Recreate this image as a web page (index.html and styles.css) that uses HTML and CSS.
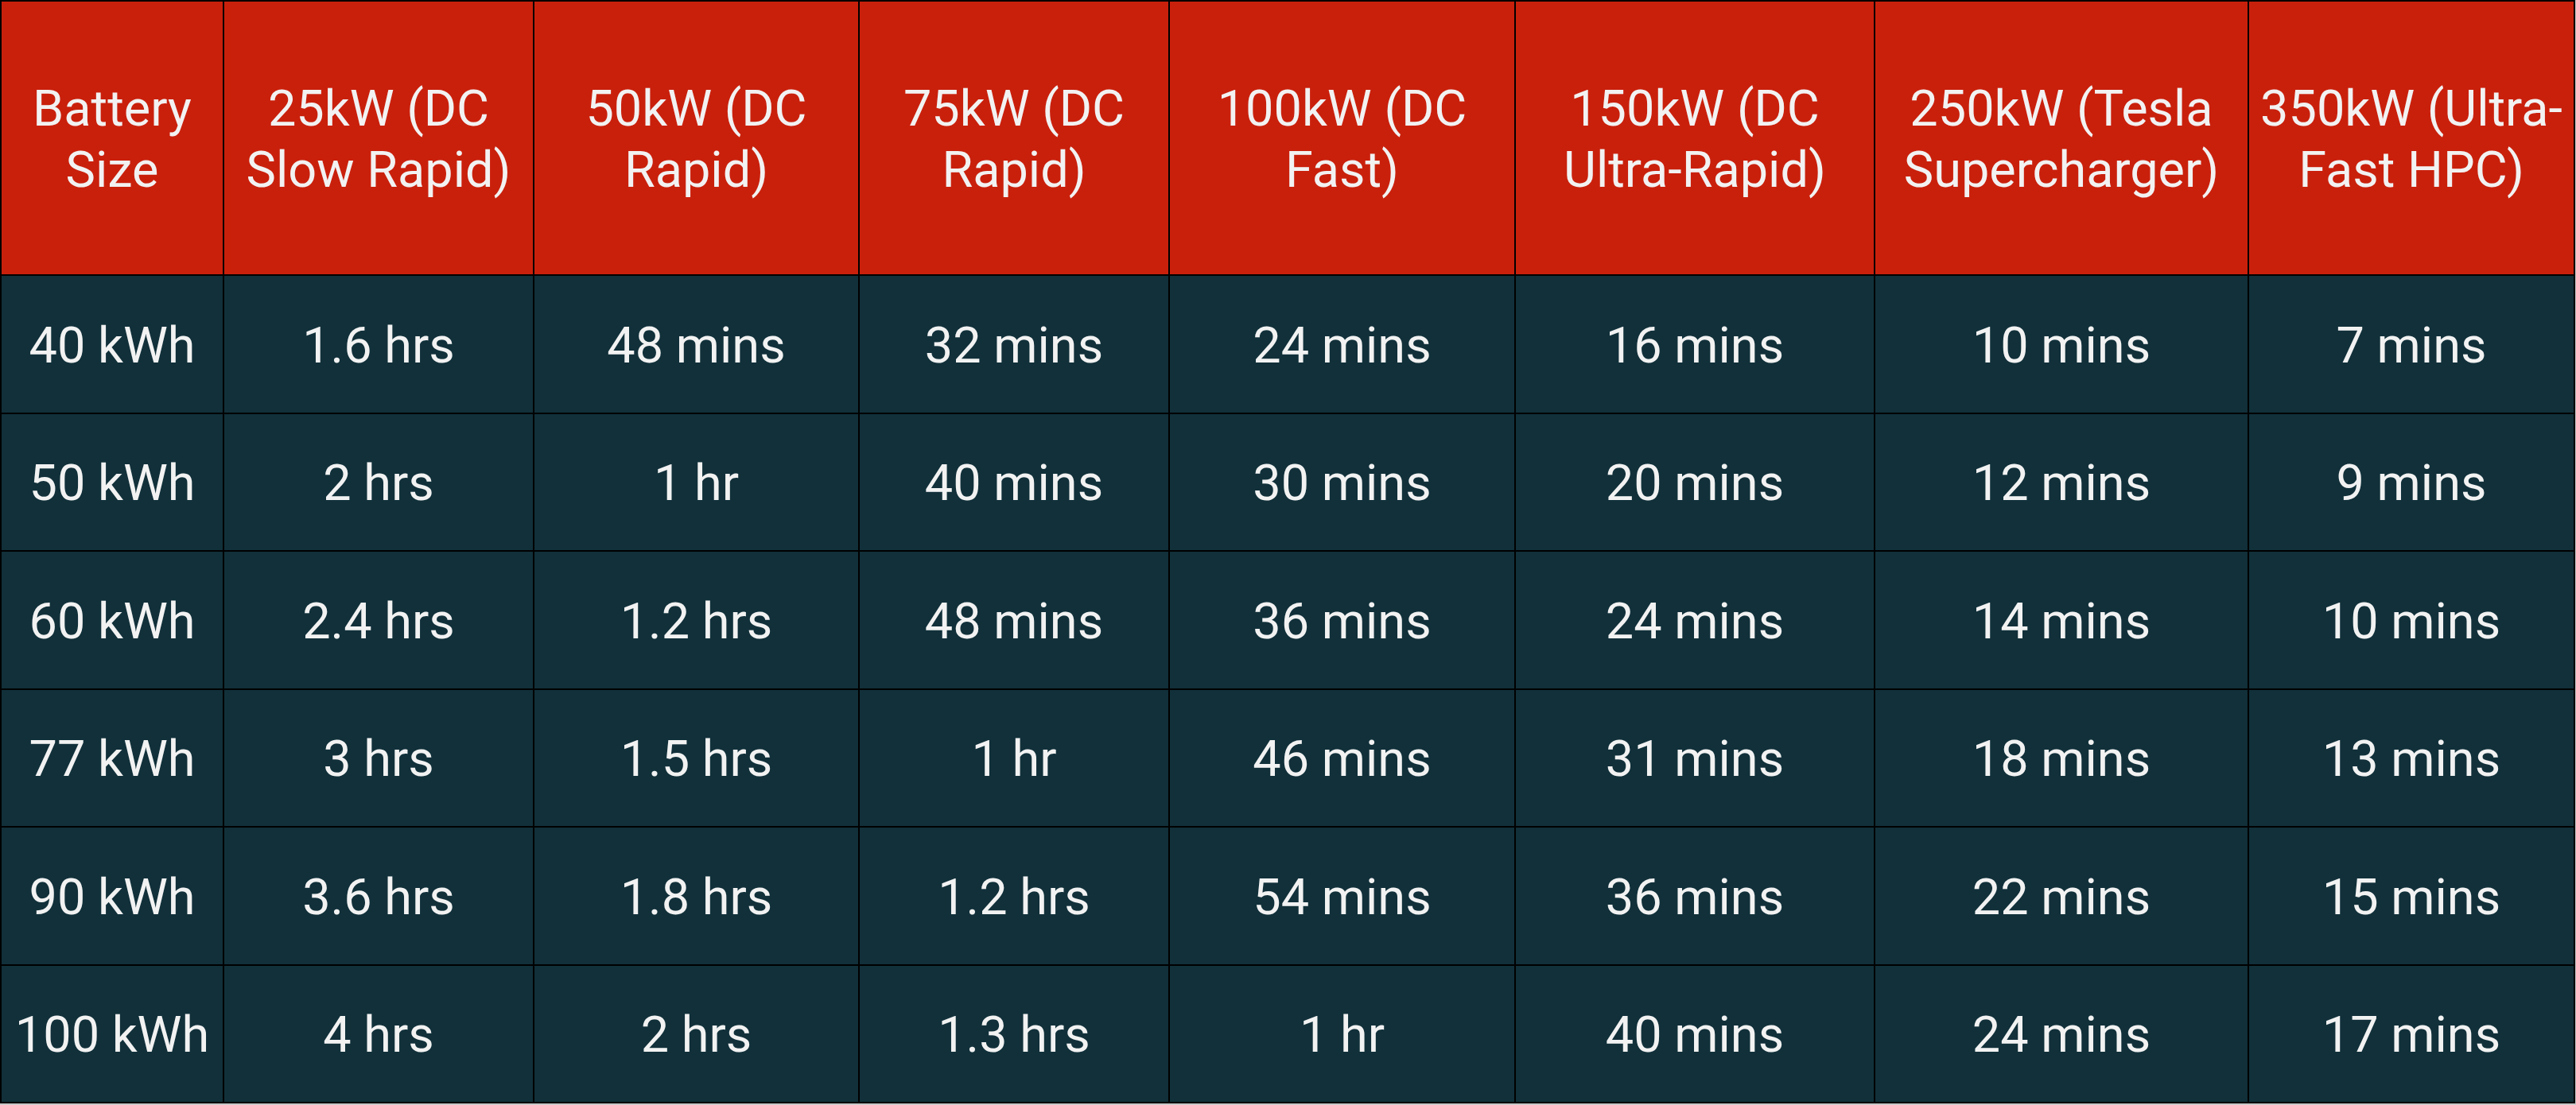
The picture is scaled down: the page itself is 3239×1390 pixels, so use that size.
FILE: index.html
```html
<!DOCTYPE html>
<html lang="en">
<head>
<meta charset="utf-8">
<title>EV Rapid Charging Times</title>
<link rel="stylesheet" href="styles.css">
</head>
<body>
<div class="table" role="table">
  <div class="cell head">Battery Size</div>
  <div class="cell head">25kW (DC Slow Rapid)</div>
  <div class="cell head">50kW (DC Rapid)</div>
  <div class="cell head">75kW (DC Rapid)</div>
  <div class="cell head">100kW (DC Fast)</div>
  <div class="cell head">150kW (DC Ultra-Rapid)</div>
  <div class="cell head">250kW (Tesla Supercharger)</div>
  <div class="cell head">350kW (Ultra-Fast HPC)</div>

  <div class="cell">40 kWh</div>
  <div class="cell">1.6 hrs</div>
  <div class="cell">48 mins</div>
  <div class="cell">32 mins</div>
  <div class="cell">24 mins</div>
  <div class="cell">16 mins</div>
  <div class="cell">10 mins</div>
  <div class="cell">7 mins</div>

  <div class="cell">50 kWh</div>
  <div class="cell">2 hrs</div>
  <div class="cell">1 hr</div>
  <div class="cell">40 mins</div>
  <div class="cell">30 mins</div>
  <div class="cell">20 mins</div>
  <div class="cell">12 mins</div>
  <div class="cell">9 mins</div>

  <div class="cell">60 kWh</div>
  <div class="cell">2.4 hrs</div>
  <div class="cell">1.2 hrs</div>
  <div class="cell">48 mins</div>
  <div class="cell">36 mins</div>
  <div class="cell">24 mins</div>
  <div class="cell">14 mins</div>
  <div class="cell">10 mins</div>

  <div class="cell">77 kWh</div>
  <div class="cell">3 hrs</div>
  <div class="cell">1.5 hrs</div>
  <div class="cell">1 hr</div>
  <div class="cell">46 mins</div>
  <div class="cell">31 mins</div>
  <div class="cell">18 mins</div>
  <div class="cell">13 mins</div>

  <div class="cell">90 kWh</div>
  <div class="cell">3.6 hrs</div>
  <div class="cell">1.8 hrs</div>
  <div class="cell">1.2 hrs</div>
  <div class="cell">54 mins</div>
  <div class="cell">36 mins</div>
  <div class="cell">22 mins</div>
  <div class="cell">15 mins</div>

  <div class="cell">100 kWh</div>
  <div class="cell">4 hrs</div>
  <div class="cell">2 hrs</div>
  <div class="cell">1.3 hrs</div>
  <div class="cell">1 hr</div>
  <div class="cell">40 mins</div>
  <div class="cell">24 mins</div>
  <div class="cell">17 mins</div>
</div>
</body>
</html>
```
FILE: styles.css
```css
html, body {
  margin: 0;
  padding: 0;
  background: #c8c8c8;
}

.table {
  display: grid;
  grid-template-columns: 278px 388px 407px 388px 433px 450px 468px 408px;
  grid-template-rows: 343px repeat(6, 171.5px);
  gap: 2px;
  padding: 2px;
  width: 3238px;
  box-sizing: border-box;
  background: #000;
  font-family: Roboto, "Liberation Sans", sans-serif;
  font-size: 63px;
  color: #f2f2f2;
}

.cell {
  display: flex;
  align-items: center;
  justify-content: center;
  text-align: center;
  background: #11303a;
  padding: 3px 4px 0;
  line-height: 77px;
}

.head {
  background: #c9200c;
}
```
